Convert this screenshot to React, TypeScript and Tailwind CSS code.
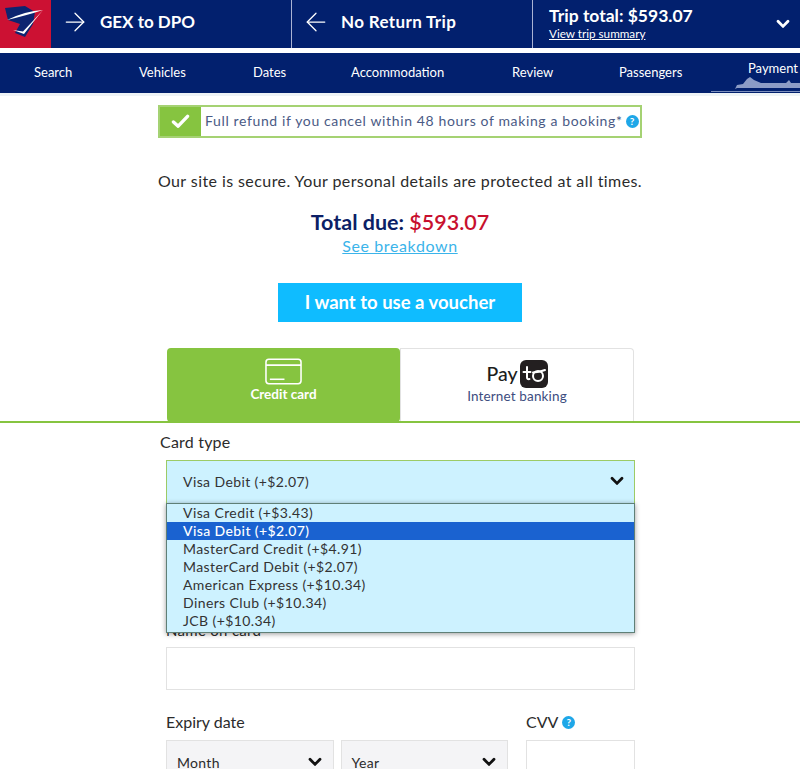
import React from 'react';
import { ArrowLeft, ArrowRight } from 'lucide-react';

const navItems = [
  { label: 'Search', width: 'w-[105px]' },
  { label: 'Vehicles', width: 'w-[114px]' },
  { label: 'Dates', width: 'w-[98px]' },
  { label: 'Accommodation', width: 'w-[161px]' },
  { label: 'Review', width: 'w-[107px]' },
  { label: 'Passengers', width: 'w-[129px]' },
];

const cardOptions = [
  'Visa Credit (+$3.43)',
  'Visa Debit (+$2.07)',
  'MasterCard Credit (+$4.91)',
  'MasterCard Debit (+$2.07)',
  'American Express (+$10.34)',
  'Diners Club (+$10.34)',
  'JCB (+$10.34)',
];

function Chevron({ className }: { className?: string }) {
  return (
    <svg viewBox="0 0 14 10" className={className} fill="none" stroke="currentColor" strokeWidth="2.8" strokeLinecap="round" strokeLinejoin="round">
      <path d="M2 2.2 7 7.4 12 2.2" />
    </svg>
  );
}

function HelpDot({ className }: { className?: string }) {
  return (
    <span className={`inline-flex items-center justify-center rounded-full bg-[#1ea7e8] text-white font-bold ${className}`}>?</span>
  );
}

function Logo() {
  return (
    <div className="w-[51px] h-full bg-[#cc1133] flex items-center justify-center shrink-0">
      <svg viewBox="0 0 51 48" className="w-[51px] h-[48px]">
        <path d="M5 8 25 6 35 12 33 24 25 37 15 33 20 24 8 20Z" fill="#0d2470" />
        <path d="M7 20Q25 11 43 10 28 15 7 20Z" fill="#ffffff" />
        <path d="M43 10Q33 22 24 34L13 30 23 31.5Q34 20 43 10Z" fill="#ffffff" />
      </svg>
    </div>
  );
}

export default function App() {
  return (
    <div className="w-[800px] h-[769px] overflow-hidden bg-white text-[#2b2b2b] font-['Lato','Noto_Sans',sans-serif]">
      {/* Top bar */}
      <header className="h-[48px] bg-[#02206e] text-white flex">
        <Logo />
        <div className="w-[241px] flex items-center border-r border-[#aab3d4] pl-[9px] pb-[4px]">
          <ArrowRight size={30} strokeWidth={1} />
          <span className="ml-[10px] text-[17px] font-bold">GEX to DPO</span>
        </div>
        <div className="w-[241px] flex items-center border-r border-[#aab3d4] pl-[9px] pb-[4px]">
          <ArrowLeft size={30} strokeWidth={1} />
          <span className="ml-[10px] text-[17px] tracking-[0.35px] font-bold">No Return Trip</span>
        </div>
        <div className="flex-1 flex items-center justify-between pl-[16px] pr-[10px]">
          <div className="flex flex-col mt-[-3px]">
            <span className="text-[17.5px] font-bold leading-[20px]">Trip total: $593.07</span>
            <span className="text-[11.7px] leading-[14px] underline">View trip summary</span>
          </div>
          <Chevron className="w-[14px] h-[10px]" />
        </div>
      </header>

      {/* Steps */}
      <nav className="h-[40px] mt-[5px] bg-[#02206e] text-white text-[13px] flex items-center relative">
        <div className="flex items-center pl-[34px] w-full">
          {navItems.map(item => (
            <span key={item.label} className={item.width}>{item.label}</span>
          ))}
        </div>
        <span className="absolute left-[748px] top-[6px] text-[13px]">Payment</span>
        <svg viewBox="0 0 89 17" className="absolute left-[711px] top-[23px] w-[89px] h-[17px]">
          <path d="M24 13 26 9 32 8 36 3 39 1 43 4 50 7 75 7 78 4 80 7 89 7 89 12 26 12Z" fill="#8c9cc6" />
          <path d="M0 15.5H89" stroke="#7d90bd" strokeWidth="1" />
        </svg>
      </nav>
      <div className="h-[3px] bg-[#eef3f6]" />

      <main className="relative flex flex-col items-center">
        {/* Refund note */}
        <div className="w-[484px] h-[33px] mt-[9px] border-2 border-[#a5d273] flex items-center">
          <div className="w-[41px] h-full bg-[#86c440] flex items-center justify-center text-white shrink-0">
            <svg viewBox="0 0 20 16" className="w-[19px] h-[15px]" fill="none" stroke="currentColor" strokeWidth="3.6" strokeLinecap="round" strokeLinejoin="round">
              <path d="M2.5 8.5 7.5 13 17.5 2.5" />
            </svg>
          </div>
          <span className="ml-[4px] mb-[2px] text-[14px] tracking-[0.63px] text-[#4a5a85] whitespace-nowrap">Full refund if you cancel within 48 hours of making a booking*</span>
          <HelpDot className="ml-[3px] w-[13px] h-[13px] text-[10px]" />
        </div>

        <p className="mt-[33px] text-[16px] leading-[20px] tracking-[0.42px] text-[#2b2b2b] whitespace-nowrap">Our site is secure. Your personal details are protected at all times.</p>

        <p className="mt-[18px] text-[21.5px] leading-[27px] font-bold text-[#0c1f66]">
          Total due: <span className="font-semibold text-[#c8102e]">$593.07</span>
        </p>
        <a className="text-[16px] leading-[20px] tracking-[0.6px] text-[#3bb4ea] underline">See breakdown</a>

        <button className="mt-[27px] w-[244px] h-[39px] bg-[#0fbcff] text-white text-[18.5px] font-bold">I want to use a voucher</button>

        {/* Payment tabs */}
        <div className="w-full mt-[26px] border-b-2 border-[#86c440] flex justify-center">
          <div className="w-[467px] h-[73px] flex ml-[1px]">
            <div className="w-[233px] bg-[#86c440] rounded-[4px] mb-[-1px] flex flex-col items-center pt-[10px] text-white">
              <svg viewBox="0 0 38 27" className="w-[37px] h-[27px]" fill="none" stroke="currentColor" strokeWidth="1.6">
                <rect x="1" y="1" width="36" height="25" rx="3" />
                <path d="M1 7h36" strokeWidth="1.8" />
                <path d="M5 21.5h15" />
              </svg>
              <span className="text-[13.5px] font-bold leading-[17px] mt-[1px]">Credit card</span>
            </div>
            <div className="flex-1 border border-b-0 border-[#e2e2e2] rounded-tr-[4px] flex flex-col items-center pt-[11px]">
              <div className="flex items-center h-[28px]">
                <span className="text-[19.5px] font-medium text-[#1d1d1d] mr-[2px]">Pay</span>
                <div className="w-[28px] h-[28px] rounded-[6px] bg-[#231f20] flex items-center justify-center">
                  <svg viewBox="0 0 28 28" className="w-[28px] h-[28px]" fill="none" stroke="#ffffff" strokeWidth="2" strokeLinecap="round">
                    <path d="M7 7v10.5c0 1.2.8 1.8 2.4 1.6M3.5 12h7" />
                    <circle cx="18" cy="16" r="5" />
                    <path d="M13 12.5c4-.2 8-1 12-2.5" />
                  </svg>
                </div>
              </div>
              <span className="text-[13.5px] leading-[17px] text-[#3d4d80] tracking-[0.15px]">Internet banking</span>
            </div>
          </div>
        </div>

        {/* Card form */}
        <div className="w-[469px] ml-[1px] flex flex-col">
          <label className="text-[16px] leading-[20px] tracking-[0.2px] mt-[9px] ml-[-6px]">Card type</label>
          <div className="relative mt-[8px] h-[44px] bg-[#cdf2ff] border border-[#9ccb66] flex items-center justify-between pl-[16px] pr-[10px] pb-[2px] text-[14px] tracking-[0.4px] text-[#333]">
            <span>Visa Debit (+$2.07)</span>
            <Chevron className="w-[14px] h-[10px] text-[#111]" />
          </div>

          <div className="h-[116px]" />
          <label className="text-[15px] leading-[20px] tracking-[0.3px]">Name on card</label>
          <div className="h-[43px] mt-[7px] border border-[#e2e2e2]" />

          <div className="flex mt-[22px] gap-[18px]">
            <div className="w-[342px] flex flex-col">
              <label className="text-[16px] leading-[20px]">Expiry date</label>
              <div className="flex gap-[7px] mt-[8px]">
                <div className="w-[168px] h-[44px] bg-[#f4f4f6] border border-[#e2e2e2] flex items-center justify-between pl-[10px] pr-[11px] text-[14px] tracking-[0.3px]">
                  <span>Month</span>
                  <Chevron className="w-[14px] h-[10px] text-[#111]" />
                </div>
                <div className="w-[168px] h-[44px] bg-[#f4f4f6] border border-[#e2e2e2] flex items-center justify-between pl-[10px] pr-[11px] text-[14px] tracking-[0.3px]">
                  <span>Year</span>
                  <Chevron className="w-[14px] h-[10px] text-[#111]" />
                </div>
              </div>
            </div>
            <div className="flex-1 flex flex-col">
              <label className="text-[16px] leading-[20px] flex items-center">CVV<HelpDot className="ml-[4px] w-[13px] h-[13px] text-[10px]" /></label>
              <div className="h-[44px] mt-[8px] border border-[#e2e2e2]" />
            </div>
          </div>
        </div>

        {/* Open card type list */}
        <ul className="absolute left-[166px] top-[407px] w-[469px] h-[130px] bg-[#cdf2ff] border border-[#5f7f76] shadow-[0_1px_5px_rgba(0,0,0,0.4)] text-[14px] leading-[18px] tracking-[0.4px] text-[#333]">
          {cardOptions.map((option, i) => (
            <li key={option} className={i === 1 ? 'pl-[16px] bg-[#1a62d0] text-white font-medium' : 'pl-[16px]'}>{option}</li>
          ))}
        </ul>
      </main>
    </div>
  );
}
